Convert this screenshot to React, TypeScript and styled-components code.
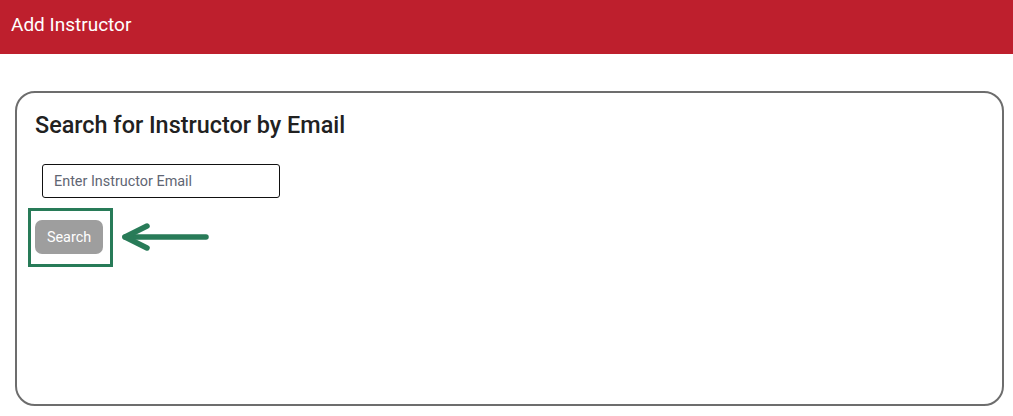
import React from "react";
import styled, { createGlobalStyle } from "styled-components";

const Global = createGlobalStyle`
  html, body { margin: 0; padding: 0; background: #fff; }
  body { font-family: Roboto, "Liberation Sans", Arial, sans-serif; }
  * { box-sizing: border-box; }
`;

const Page = styled.div`
  width: 1013px;
  height: 416px;
  display: flex;
  flex-direction: column;
  overflow: hidden;
`;

const TopBar = styled.header`
  height: 54px;
  background: #be1f2d;
  color: #fff;
  display: flex;
  align-items: center;
  padding: 0 11px 6px;
  font-size: 19px;
  font-weight: 400;
`;

const Card = styled.section`
  margin: 37px 9px 10px 15px;
  flex: 1;
  border: 2px solid #6d6d6d;
  border-radius: 20px;
  padding: 18px 18px;
  display: flex;
  flex-direction: column;
  align-items: flex-start;
`;

const Heading = styled.h2`
  margin: 0;
  font-size: 23.4px;
  font-weight: 500;
  color: #212121;
  line-height: 28px;
`;

const EmailInput = styled.input`
  margin: 25px 0 0 7px;
  width: 238px;
  height: 34px;
  border: 1px solid #111;
  border-radius: 3px;
  padding: 0 11px;
  font-family: inherit;
  font-size: 14.4px;
  color: #222;
  outline: none;
  &::placeholder { color: #5f6673; }
`;

const ButtonSpot = styled.div`
  position: relative;
  margin-top: 22px;
`;

const SearchButton = styled.button`
  width: 68px;
  height: 34px;
  border: none;
  border-radius: 7px;
  background: #9e9e9e;
  color: #fff;
  font-family: inherit;
  font-size: 14.4px;
  padding: 0;
`;

const Highlight = styled.div`
  position: absolute;
  left: -7px;
  top: -12px;
  width: 85px;
  height: 59px;
  border: 3.5px solid #287b58;
  pointer-events: none;
`;

const Pointer = styled.svg`
  position: absolute;
  left: 86px;
  top: 0;
  overflow: visible;
`;

export default function App() {
  return (
    <Page>
      <Global />
      <TopBar>Add Instructor</TopBar>
      <Card>
        <Heading>Search for Instructor by Email</Heading>
        <EmailInput placeholder="Enter Instructor Email" />
        <ButtonSpot>
          <SearchButton>Search</SearchButton>
          <Highlight />
          <Pointer width="90" height="36" viewBox="0 0 90 36">
            <g stroke="#287b58" strokeWidth="5.5" strokeLinecap="round" strokeLinejoin="round" fill="none">
              <path d="M4 17 L85 17" />
              <path d="M26 6 L4 17 L26 28" />
            </g>
          </Pointer>
        </ButtonSpot>
      </Card>
    </Page>
  );
}
